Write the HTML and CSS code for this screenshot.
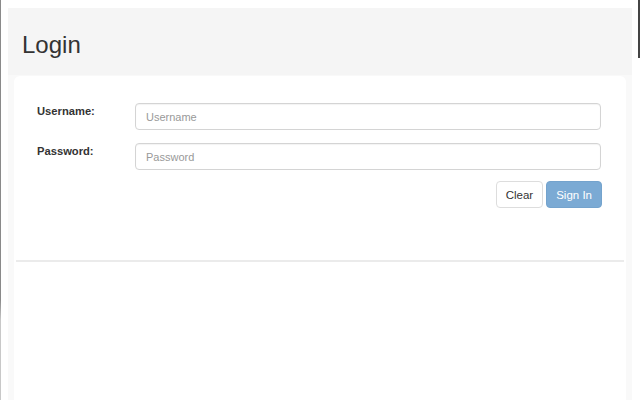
FILE: index.html
```html
<!DOCTYPE html>
<html>
<head>
<meta charset="utf-8">
<link rel="stylesheet" href="styles.css">
</head>
<body>
<div class="edge-left"></div>
<div class="main">
  <div class="panel">
    <div class="header"><h3 class="title">Login</h3></div>
    <div class="card">
      <form class="form">
        <div class="row">
          <label class="label">Username:</label>
          <input class="input" type="text" placeholder="Username">
        </div>
        <div class="row">
          <label class="label">Password:</label>
          <input class="input" type="password" placeholder="Password">
        </div>
        <div class="actions">
          <button type="button" class="btn btn-default">Clear</button>
          <button type="button" class="btn btn-primary">Sign In</button>
        </div>
      </form>
      <div class="divider"></div>
    </div>
  </div>
</div>
<div class="edge-right"></div>
</body>
</html>
```
FILE: styles.css
```css
html, body {
  margin: 0;
  height: 100%;
}
body {
  display: flex;
  height: 400px;
  background: #fff;
  font-family: "Liberation Sans", Arial, sans-serif;
  color: #333;
  overflow: hidden;
}
.edge-left {
  width: 1px;
  background: linear-gradient(#8a8a8a 0, #8a8a8a 300px, #c8c8c8 320px);
}
.edge-right {
  width: 3px;
  background: linear-gradient(to right, #fff 0, #fff 1px, #444 1px);
  background-size: 100% 58px;
  background-repeat: no-repeat;
  background-color: #fff;
}
.main {
  flex: 1;
  padding: 8px 5px 0 7px;
  display: flex;
}
.panel {
  flex: 1;
  background: #f9f9f9;
  display: flex;
  flex-direction: column;
}
.header {
  height: 67px;
  background: #f5f5f5;
  padding-left: 14px;
  box-sizing: border-box;
}
.title {
  margin: 0;
  padding-top: 24px;
  font-size: 24px;
  font-weight: 400;
  line-height: 26px;
  color: #333;
}
.card {
  flex: 1;
  margin: 1px 6px 0;
  background: #fff;
  border-radius: 6px 6px 0 0;
}
.form {
  padding: 27px 25px 0 23px;
}
.row {
  display: flex;
  align-items: flex-start;
  margin-bottom: 13px;
}
.label {
  width: 98px;
  font-size: 11.2px;
  font-weight: bold;
  line-height: 16px;
  padding-top: 0;
  color: #333;
}
.input {
  flex: 1;
  height: 27px;
  box-sizing: border-box;
  border: 1px solid #d4d4d4;
  border-radius: 4px;
  padding: 0 10px;
  font-family: "Liberation Sans", Arial, sans-serif;
  font-size: 11px;
  color: #555;
  box-shadow: inset 0 1px 1px rgba(0,0,0,0.05);
  outline: none;
}
.input::placeholder {
  color: #999;
}
.actions {
  display: flex;
  justify-content: flex-end;
  gap: 3px;
  margin-top: -2px;
  margin-right: -1px;
}
.btn {
  height: 27px;
  box-sizing: border-box;
  padding: 0 9px;
  font-family: "Liberation Sans", Arial, sans-serif;
  font-size: 11.5px;
  border-radius: 4px;
  border: 1px solid #ddd;
  background: #fff;
  color: #333;
}
.btn-primary {
  background: #7baad4;
  border-color: #74a3cd;
  color: #fff;
  padding: 0 9px;
}
.divider {
  margin: 52px 2px 0;
  height: 2px;
  background: #ebebeb;
}
```
